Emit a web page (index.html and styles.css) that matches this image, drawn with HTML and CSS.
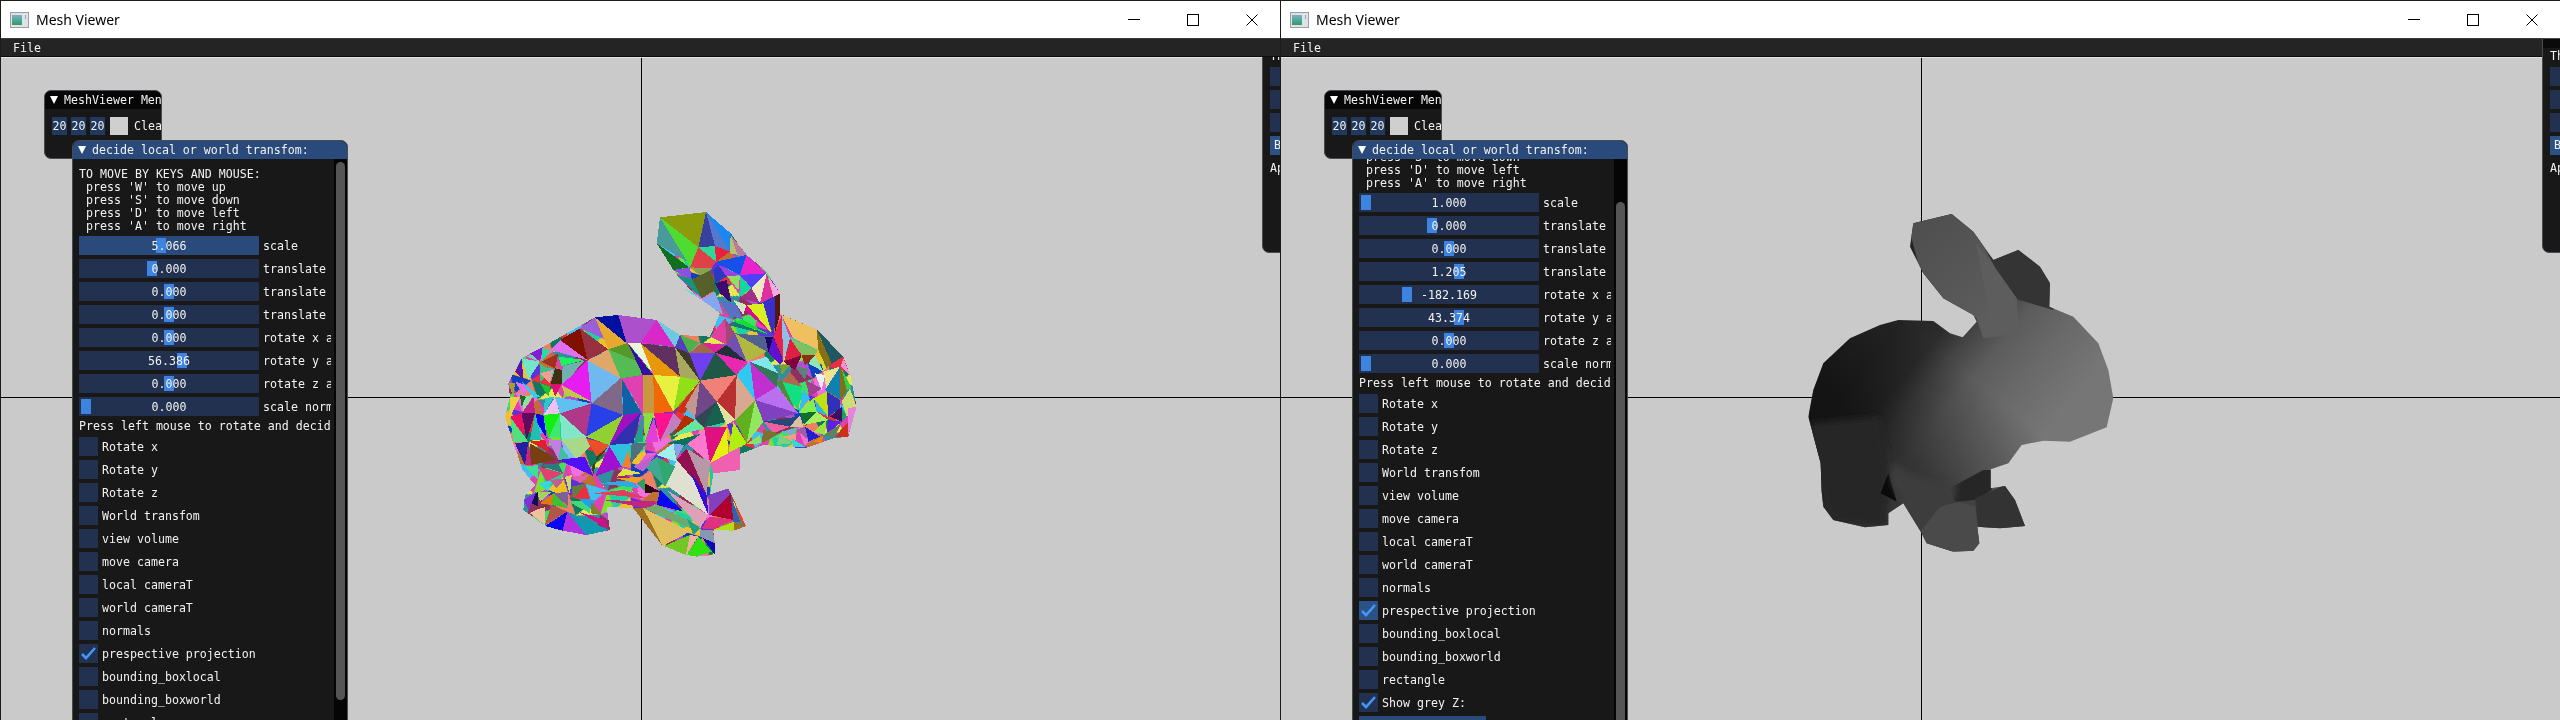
FILE: index.html
```html
<!DOCTYPE html>
<html lang="en">
<head>
    <meta charset="UTF-8">
    <title>Mesh Viewer</title>
    <link rel="stylesheet" href="styles.css">
</head>
<body>

<div class="desktop">

    <!-- left window: random coloured faces -->
    <div class="window">
        <div class="titlebar">
            <svg class="app-icon" viewBox="0 0 19 16"><rect x="0.5" y="0.5" width="18" height="15" fill="#dfe3e6" stroke="#9a9fa4"/><defs><linearGradient id="ico1" x1="0" y1="0" x2="0" y2="1"><stop offset="0" stop-color="#7fb0c8"/><stop offset="1" stop-color="#2f9a6a"/></linearGradient></defs><rect x="2" y="3" width="10" height="10" fill="url(#ico1)"/><rect x="15" y="3" width="1" height="4" fill="#7fb0c8"/></svg>
            <span class="title-text">Mesh Viewer</span>
            <div class="caption-buttons">
                <svg viewBox="0 0 12 12"><path d="M0 5.5H12" stroke="#000" fill="none"/></svg>
                <svg viewBox="0 0 12 12"><rect x="0.5" y="0.5" width="11" height="11" stroke="#000" fill="none"/></svg>
                <svg viewBox="0 0 12 12"><path d="M0.5 0.5L11.5 11.5M11.5 0.5L0.5 11.5" stroke="#000" fill="none"/></svg>
            </div>
        </div>
        <div class="menubar"><span>File</span></div>

        <div class="canvas">
            <div class="axis-v"></div>
            <div class="axis-h"></div>

            <svg class="bunny-color" viewBox="0 0 1200 1200" shape-rendering="crispEdges">
                <defs>
                    <!-- tile under the hand placed faces, so no flat colour shows in the gaps -->
                    <pattern id="facets" width="210" height="150" patternUnits="userSpaceOnUse" patternTransform="rotate(17)">
                        <rect width="210" height="150" fill="#e040b0"/>
                        <polygon fill="#20d0a0" points="0,0 70,0 35,50"/>
                        <polygon fill="#f0c030" points="70,0 35,50 105,50"/>
                        <polygon fill="#6030e0" points="70,0 140,0 105,50"/>
                        <polygon fill="#e83040" points="140,0 105,50 175,50"/>
                        <polygon fill="#40c0f0" points="140,0 210,0 175,50"/>
                        <polygon fill="#80e030" points="0,0 35,50 0,75"/>
                        <polygon fill="#b050d0" points="35,50 0,75 70,100"/>
                        <polygon fill="#1040c0" points="35,50 105,50 70,100"/>
                        <polygon fill="#f08060" points="105,50 70,100 140,100"/>
                        <polygon fill="#107860" points="105,50 175,50 140,100"/>
                        <polygon fill="#e8e850" points="175,50 140,100 210,75"/>
                        <polygon fill="#903060" points="0,75 70,100 0,150"/>
                        <polygon fill="#40e060" points="70,100 0,150 70,150"/>
                        <polygon fill="#f070e0" points="70,100 140,100 105,150"/>
                        <polygon fill="#c07030" points="140,100 105,150 175,150"/>
                        <polygon fill="#3090a0" points="140,100 210,75 210,150"/>
                    </pattern>
                </defs>
                <polygon fill="url(#facets)" points="540,82 678,66 752,130 800,195 860,245 900,310 900,372 1010,418 1090,500 1112,560 1130,650 1105,740 1060,745 975,775 850,765 760,800 690,855 690,915 745,895 798,1008 700,1022 705,1095 650,1100 560,1068 460,955 380,950 390,1020 320,1035 200,1010 130,960 135,915 165,885 128,840 100,760 75,680 90,620 85,580 125,505 190,470 345,382 415,375 530,390 600,435 690,440 720,370 640,310 580,240 530,160"/>
                <!-- ear -->
                <polygon fill="#8b9b0c" points="540,82 678,66 655,172"/>
                <polygon fill="#4fdc32" points="540,82 655,172 630,232"/>
                <polygon fill="#4b9a9a" points="540,82 530,160 622,215"/>
                <polygon fill="#0f6f22" points="530,160 580,240 628,232"/>
                <polygon fill="#38429e" points="678,66 655,172 705,168"/>
                <polygon fill="#5577cc" points="678,66 705,168 750,185"/>
                <polygon fill="#1a88ee" points="678,66 752,130 750,185"/>
                <polygon fill="#2fd898" points="655,172 705,168 708,215"/>
                <polygon fill="#e82040" points="705,168 750,185 708,215"/>
                <polygon fill="#e04048" points="655,172 708,215 695,235 630,232"/>
                <polygon fill="#b6c26c" points="752,130 750,190 775,195"/>
                <polygon fill="#bb7ba0" points="752,135 800,195 775,200"/>
                <polygon fill="#1550ea" points="708,215 800,195 780,255 720,225"/>
                <polygon fill="#e822cc" points="800,195 860,250 780,255"/>
                <polygon fill="#5040f8" points="780,255 860,250 815,295"/>
                <polygon fill="#a040e0" points="715,225 780,255 740,260"/>
                <polygon fill="#8aa050" points="630,232 695,235 675,268"/>
                <polygon fill="#8a50e0" points="580,240 630,232 635,268"/>
                <polygon fill="#55602a" points="635,268 695,240 705,300 665,325"/>
                <polygon fill="#1a9080" points="590,255 635,265 665,325"/>
                <polygon fill="#40e0e0" points="610,295 665,330 640,310"/>
                <polygon fill="#84a8f0" points="665,330 705,305 730,375"/>
                <polygon fill="#2a3ac0" points="700,240 715,225 740,260 705,280"/>
                <polygon fill="#400a70" points="705,280 740,270 755,340 720,310"/>
                <polygon fill="#90e060" points="740,258 780,258 775,300"/>
                <polygon fill="#10d8a0" points="780,258 815,295 778,320"/>
                <polygon fill="#f0e8c0" points="860,250 815,295 840,340"/>
                <polygon fill="#e030a0" points="860,250 880,320 840,340"/>
                <polygon fill="#f8a8e0" points="865,260 900,310 880,320"/>
                <polygon fill="#a03088" points="815,295 840,340 780,325"/>
                <polygon fill="#3830c8" points="845,340 900,310 880,435"/>
                <polygon fill="#501810" points="885,320 900,310 900,372 885,430"/>
                <polygon fill="#d8f020" points="800,345 850,340 875,430"/>
                <polygon fill="#e00890" points="780,350 800,345 870,425"/>
                <polygon fill="#5870c8" points="720,330 770,345 790,390 745,375"/>
                <polygon fill="#d0e8c0" points="760,330 800,345 790,375"/>
                <polygon fill="#30a050" points="715,330 745,380 780,400 735,370"/>
                <polygon fill="#10e030" points="760,395 790,390 870,435"/>
                <polygon fill="#16786e" points="745,405 760,395 880,440"/>
                <!-- head -->
                <polygon fill="#e8204c" points="905,378 880,440 910,515"/>
                <polygon fill="#90c0e0" points="905,378 930,445 910,515"/>
                <polygon fill="#f0c060" points="905,375 1010,418 1015,480 940,445"/>
                <polygon fill="#80c060" points="930,445 1015,480 1005,495 965,495"/>
                <polygon fill="#e02040" points="930,445 965,495 925,515 912,515"/>
                <polygon fill="#205860" points="1010,418 1090,500 1055,520"/>
                <polygon fill="#887010" points="1010,420 1055,520 1040,535 1015,480"/>
                <polygon fill="#c8e030" points="1015,480 1040,535 1030,545"/>
                <polygon fill="#800040" points="910,515 965,495 945,540"/>
                <polygon fill="#903010" points="965,495 1005,495 975,525"/>
                <polygon fill="#90e8b0" points="1005,495 1030,545 985,520"/>
                <polygon fill="#80a028" points="900,525 930,525 905,555"/>
                <polygon fill="#b06850" points="930,545 965,590 905,575"/>
                <polygon fill="#608080" points="945,530 985,535 975,570"/>
                <polygon fill="#f0e090" points="1030,545 1080,530 1040,600"/>
                <polygon fill="#e8f0ff" points="1005,550 1035,555 1025,600"/>
                <polygon fill="#a04090" points="975,570 1025,595 990,620"/>
                <polygon fill="#1080b0" points="1080,530 1085,630 1035,600"/>
                <polygon fill="#807018" points="1080,530 1110,590 1080,630"/>
                <polygon fill="#f090d8" points="1090,505 1112,560 1082,530"/>
                <polygon fill="#30d050" points="1085,535 1115,595 1100,600"/>
                <polygon fill="#c8e070" points="1110,595 1130,650 1100,680 1085,635"/>
                <polygon fill="#3030b8" points="1040,605 1080,630 1080,655 1045,680"/>
                <polygon fill="#c0e010" points="1000,625 1040,605 1045,685"/>
                <polygon fill="#30c0f0" points="970,600 990,625 955,670"/>
                <polygon fill="#10e080" points="905,575 965,590 955,665"/>
                <polygon fill="#508840" points="885,575 905,570 950,670"/>
                <polygon fill="#80f050" points="955,670 1000,625 1010,665"/>
                <polygon fill="#30b8e0" points="1005,630 1045,680 1010,665"/>
                <polygon fill="#107030" points="960,670 1010,665 975,710"/>
                <polygon fill="#a8f060" points="1010,665 1045,690 970,705"/>
                <polygon fill="#401060" points="1050,680 1085,650 1085,695"/>
                <polygon fill="#10a070" points="1085,650 1100,680 1085,695"/>
                <polygon fill="#e880e0" points="1105,655 1130,650 1105,735"/>
                <polygon fill="#d03018" points="1105,695 1105,740 1065,740"/>
                <polygon fill="#6020e0" points="1045,690 1085,695 1040,735"/>
                <polygon fill="#608060" points="1030,735 1085,700 1060,745"/>
                <polygon fill="#d8c0a0" points="930,710 960,675 970,710"/>
                <polygon fill="#a0e040" points="1000,725 1040,690 1035,735"/>
                <polygon fill="#2020d0" points="975,710 1020,740 985,755"/>
                <polygon fill="#a060a0" points="950,720 975,710 985,750"/>
                <polygon fill="#f08010" points="1000,755 1030,735 1025,760"/>
                <polygon fill="#80a8e0" points="905,725 950,715 935,735"/>
                <polygon fill="#f0a080" points="910,740 950,730 945,760"/>
                <polygon fill="#f060a0" points="850,695 930,710 880,730"/>
                <polygon fill="#807030" points="850,720 900,730 845,760"/>
                <polygon fill="#80d080" points="900,730 935,760 890,765"/>
                <polygon fill="#30d8d8" points="935,745 975,770 940,770"/>
                <!-- body top -->
                <polygon fill="#9a60d8" points="300,415 345,382 380,450"/>
                <polygon fill="#e8a830" points="345,382 440,460 385,478"/>
                <polygon fill="#0010a0" points="345,382 415,375 440,460"/>
                <polygon fill="#ac50cc" points="415,375 530,390 482,458 440,460"/>
                <polygon fill="#d828c8" points="530,390 482,458 585,472"/>
                <polygon fill="#70c8e0" points="530,390 600,435 585,472"/>
                <polygon fill="#5040c0" points="600,435 628,490 585,472"/>
                <polygon fill="#50b048" points="600,435 660,458 628,490"/>
                <polygon fill="#801000" points="300,415 240,450 322,510"/>
                <polygon fill="#983040" points="300,415 385,478 322,510"/>
                <polygon fill="#e070f0" points="240,450 212,480 322,510"/>
                <polygon fill="#e0a868" points="385,478 322,512 422,565"/>
                <polygon fill="#559a28" points="385,478 440,460 485,520"/>
                <polygon fill="#55bb55" points="385,478 485,520 488,555 422,565"/>
                <polygon fill="#e8f8d8" points="445,460 482,460 520,550"/>
                <polygon fill="#3510a0" points="445,462 520,555 488,555"/>
                <polygon fill="#e89808" points="482,460 600,560 520,555"/>
                <polygon fill="#603060" points="482,460 585,472 600,560"/>
                <polygon fill="#a8a860" points="585,472 660,572 600,560"/>
                <polygon fill="#403828" points="585,472 628,490 660,572"/>
                <polygon fill="#7040f0" points="628,490 705,488 660,572"/>
                <polygon fill="#a06848" points="628,490 665,458 705,488"/>
                <polygon fill="#205848" points="705,488 770,555 660,572"/>
                <polygon fill="#e828b0" points="705,488 800,515 770,555"/>
                <polygon fill="#e040a0" points="690,440 735,385 740,465"/>
                <polygon fill="#a04878" points="735,385 765,430 740,465"/>
                <polygon fill="#203038" points="705,488 740,465 800,515"/>
                <polygon fill="#7050b0" points="765,430 740,465 800,515"/>
                <polygon fill="#b0b840" points="765,430 860,485 800,515"/>
                <polygon fill="#506090" points="765,430 880,440 860,485"/>
                <polygon fill="#e020a0" points="665,458 740,465 705,488"/>
                <polygon fill="#180860" points="855,440 880,440 905,500 865,485"/>
                <polygon fill="#6010d0" points="880,440 910,515 900,525 865,490"/>
                <polygon fill="#e71cf0" points="322,512 245,585 335,640"/>
                <polygon fill="#70b8f0" points="322,512 422,565 335,640"/>
                <polygon fill="#806888" points="422,565 335,640 430,675"/>
                <polygon fill="#e040b0" points="430,565 488,555 488,675"/>
                <polygon fill="#1060a8" points="425,565 488,675 430,675"/>
                <polygon fill="#c89840" points="488,555 520,555 522,670 488,675"/>
                <polygon fill="#e8f040" points="520,555 600,560 580,665"/>
                <polygon fill="#f06808" points="520,555 580,665 522,670"/>
                <polygon fill="#90e018" points="600,560 660,572 580,665"/>
                <polygon fill="#d03018" points="660,572 585,665 615,670"/>
                <polygon fill="#c09890" points="660,572 615,650 645,685"/>
                <polygon fill="#704888" points="660,572 710,635 645,685"/>
                <polygon fill="#f08078" points="660,572 770,555 710,635"/>
                <polygon fill="#b83030" points="770,555 710,635 765,690"/>
                <polygon fill="#d8a890" points="770,555 825,630 765,690"/>
                <polygon fill="#30c8f0" points="810,515 770,555 825,630"/>
                <polygon fill="#c030d0" points="810,515 825,630 890,590"/>
                <polygon fill="#307858" points="810,515 890,590 895,550"/>
                <polygon fill="#80e8e8" points="810,515 860,500 895,550"/>
                <polygon fill="#b870f0" points="890,590 825,630 955,670"/>
                <polygon fill="#8040c0" points="825,630 850,695 955,670"/>
                <polygon fill="#284878" points="850,695 955,680 930,710"/>
                <polygon fill="#60b020" points="825,630 765,690 800,760"/>
                <polygon fill="#90e860" points="825,630 850,695 800,760"/>
                <polygon fill="#186050" points="710,635 765,690 672,712"/>
                <polygon fill="#304850" points="710,635 645,685 672,712"/>
                <polygon fill="#e0e0a0" points="710,635 765,690 740,705"/>
                <polygon fill="#e01080" points="672,712 740,712 690,820"/>
                <polygon fill="#e8f010" points="740,712 690,820 745,795"/>
                <polygon fill="#b0f010" points="760,695 745,795 800,760"/>
                <polygon fill="#ff78d0" points="620,760 672,715 690,820"/>
                <polygon fill="#901050" points="620,775 590,810 680,915"/>
                <polygon fill="#b898a8" points="620,775 690,820 680,915"/>
                <polygon fill="#f060b0" points="690,820 780,770 780,840 700,850"/>
                <polygon fill="#20c8a0" points="690,825 700,850 690,915"/>
                <polygon fill="#90e060" points="840,735 845,760 800,762"/>
                <!-- left flank -->
                <polygon fill="#70d8b0" points="140,500 190,470 180,515"/>
                <polygon fill="#8020d0" points="150,490 190,470 180,515"/>
                <polygon fill="#a03020" points="185,515 235,490 225,535"/>
                <polygon fill="#20f060" points="235,500 315,510 245,528"/>
                <polygon fill="#70b0b0" points="248,528 315,512 245,585"/>
                <polygon fill="#20e0a0" points="185,475 212,480 185,515"/>
                <polygon fill="#70e8c8" points="125,505 180,515 145,570"/>
                <polygon fill="#6010b0" points="105,545 125,505 130,570"/>
                <polygon fill="#40c080" points="180,520 220,545 180,575"/>
                <polygon fill="#f0a090" points="180,550 220,540 210,580"/>
                <polygon fill="#403010" points="225,535 245,540 245,582 212,582"/>
                <polygon fill="#e01070" points="212,582 245,582 225,620"/>
                <polygon fill="#c0c848" points="245,585 335,635 255,615"/>
                <polygon fill="#a8a020" points="85,580 105,580 100,620"/>
                <polygon fill="#e070f0" points="105,575 150,590 130,615"/>
                <polygon fill="#30d0f0" points="125,575 180,620 160,625"/>
                <polygon fill="#20c030" points="180,580 212,590 205,620"/>
                <polygon fill="#90e0a0" points="125,620 160,615 130,670"/>
                <polygon fill="#c02090" points="160,620 165,670 125,670"/>
                <polygon fill="#f0d040" points="90,620 120,620 90,680"/>
                <polygon fill="#107020" points="120,615 138,620 125,650"/>
                <polygon fill="#30c8d0" points="195,625 222,620 190,675"/>
                <polygon fill="#f0c0f0" points="225,622 190,675 240,670"/>
                <polygon fill="#60c0f0" points="225,620 335,640 240,670"/>
                <polygon fill="#b03888" points="240,670 335,640 318,740"/>
                <polygon fill="#2840e8" points="335,640 430,675 318,740"/>
                <polygon fill="#90d030" points="430,675 318,740 388,765"/>
                <polygon fill="#a010c0" points="430,675 482,668 388,765"/>
                <polygon fill="#3030b0" points="482,668 460,760 388,765"/>
                <polygon fill="#20a090" points="490,668 460,760 490,755"/>
                <polygon fill="#88e040" points="490,668 522,670 495,755"/>
                <polygon fill="#e040d8" points="522,680 495,755 535,755"/>
                <polygon fill="#ff1090" points="522,670 580,670 540,755"/>
                <polygon fill="#c080c0" points="580,670 610,700 540,755"/>
                <polygon fill="#b03000" points="615,675 575,740 645,690"/>
                <polygon fill="#60e8a0" points="575,740 645,690 672,715"/>
                <polygon fill="#107060" points="560,760 665,730 610,770"/>
                <polygon fill="#10f010" points="190,675 240,670 205,745"/>
                <polygon fill="#40e870" points="240,670 205,745 240,740"/>
                <polygon fill="#80e8c8" points="240,670 318,740 245,750"/>
                <polygon fill="#0808e0" points="168,672 190,675 200,745 172,700"/>
                <polygon fill="#a8d888" points="245,750 318,740 330,770 290,810"/>
                <polygon fill="#80c0f0" points="245,750 290,810 255,810"/>
                <polygon fill="#40c0a0" points="238,760 275,815 235,810"/>
                <polygon fill="#e85028" points="318,745 388,765 350,800"/>
                <polygon fill="#304810" points="388,768 335,830 340,855 350,800"/>
                <polygon fill="#a010d0" points="388,768 345,860 425,830"/>
                <polygon fill="#30c0e0" points="388,765 455,760 425,830"/>
                <polygon fill="#507080" points="455,760 500,760 450,825"/>
                <polygon fill="#e860d0" points="500,790 465,835 530,790"/>
                <polygon fill="#f08030" points="445,780 425,830 455,835"/>
                <polygon fill="#5010f8" points="235,810 315,800 340,858"/>
                <polygon fill="#f01060" points="90,680 125,670 135,750"/>
                <polygon fill="#600a60" points="125,670 165,670 140,750"/>
                <polygon fill="#20c0b0" points="165,670 175,710 185,750 150,750"/>
                <polygon fill="#50e080" points="90,680 145,755 100,755"/>
                <polygon fill="#f0a0e0" points="100,760 115,800 128,835"/>
                <polygon fill="#e02030" points="150,755 195,750 210,790"/>
                <polygon fill="#784010" points="150,760 210,795 225,810 150,825"/>
                <polygon fill="#c080e0" points="205,748 245,750 235,810"/>
                <polygon fill="#2020a0" points="105,760 145,755 135,825"/>
                <polygon fill="#c02880" points="145,755 155,825 135,825"/>
                <polygon fill="#307880" points="175,825 235,820 250,850"/>
                <polygon fill="#40e090" points="135,830 175,825 175,870"/>
                <polygon fill="#e04070" points="175,830 250,850 200,875"/>
                <polygon fill="#30d8e0" points="175,880 215,870 205,905"/>
                <polygon fill="#c06090" points="210,870 255,865 230,895"/>
                <!-- front leg and feet -->
                <polygon fill="#f0c020" points="215,905 255,880 260,915"/>
                <polygon fill="#c8e060" points="255,860 275,855 270,915"/>
                <polygon fill="#608040" points="275,890 320,880 280,925"/>
                <polygon fill="#e060b0" points="275,860 330,855 300,880"/>
                <polygon fill="#f0c0a0" points="150,970 195,945 195,1005"/>
                <polygon fill="#b05848" points="195,1005 215,945 262,965"/>
                <polygon fill="#0808f0" points="195,1008 262,965 248,1022"/>
                <polygon fill="#b030e0" points="248,1022 262,965 318,1035"/>
                <polygon fill="#1098b0" points="262,965 388,1020 318,1035"/>
                <polygon fill="#d01090" points="295,965 375,990 385,1018"/>
                <polygon fill="#40d878" points="265,935 335,930 330,970"/>
                <polygon fill="#20a0f0" points="295,925 345,930 335,960"/>
                <polygon fill="#40c030" points="220,910 265,955 215,945"/>
                <polygon fill="#e07810" points="180,940 220,910 215,945"/>
                <polygon fill="#806098" points="220,910 265,905 265,950"/>
                <polygon fill="#a8d060" points="170,905 215,905 180,935"/>
                <polygon fill="#101050" points="145,935 175,905 175,950"/>
                <polygon fill="#803820" points="150,965 215,945 195,945"/>
                <polygon fill="#808028" points="335,935 365,975 332,970"/>
                <polygon fill="#8030e0" points="130,930 170,905 145,960"/>
                <!-- belly -->
                <polygon fill="#30a8e0" points="360,880 450,870 480,895"/>
                <polygon fill="#f0a020" points="410,865 490,860 470,880"/>
                <polygon fill="#e04060" points="340,910 430,900 500,925"/>
                <polygon fill="#d0f040" points="345,885 490,910 430,900"/>
                <polygon fill="#c02880" points="370,930 540,935 500,955"/>
                <polygon fill="#30a060" points="470,880 495,865 495,905"/>
                <polygon fill="#300810" points="495,880 540,905 495,910"/>
                <polygon fill="#0808f0" points="540,900 610,965 530,945"/>
                <polygon fill="#e0e0d0" points="590,810 680,915 685,975 558,885"/>
                <polygon fill="#3010d8" points="630,845 680,915 685,975"/>
                <polygon fill="#40a890" points="495,830 530,800 555,890"/>
                <polygon fill="#30a870" points="530,800 585,830 555,890"/>
                <polygon fill="#a0f0f0" points="530,795 580,760 590,815"/>
                <polygon fill="#80a8e8" points="580,760 612,765 590,805"/>
                <polygon fill="#c060d0" points="460,830 530,790 490,845"/>
                <polygon fill="#e0e040" points="430,835 485,850 410,860"/>
                <polygon fill="#8040c0" points="685,915 745,895 752,910 688,975"/>
                <polygon fill="#b00030" points="688,975 752,910 760,990"/>
                <polygon fill="#3060b0" points="752,915 780,995 760,995"/>
                <polygon fill="#f04020" points="755,915 798,1008 782,995"/>
                <polygon fill="#e03080" points="688,980 760,990 695,1018 665,1015"/>
                <polygon fill="#b0e010" points="698,1020 762,995 762,1022"/>
                <polygon fill="#a07020" points="762,995 798,1008 762,1022"/>
                <polygon fill="#e0a0b8" points="560,900 685,975 660,1015"/>
                <polygon fill="#70a870" points="490,955 530,945 660,1010 632,1015"/>
                <polygon fill="#e0c060" points="490,955 630,1025 548,1068"/>
                <polygon fill="#a07020" points="460,955 490,955 548,1068"/>
                <polygon fill="#70c820" points="552,1068 630,1035 618,1095"/>
                <polygon fill="#f0b0a0" points="630,1035 655,1040 618,1095"/>
                <polygon fill="#30e010" points="655,1040 695,1085 650,1100 620,1095"/>
                <polygon fill="#0808b8" points="665,1040 705,1060 705,1095"/>
                <polygon fill="#8898b0" points="660,1020 698,1020 705,1060 660,1040"/>
                <polygon fill="#20a080" points="620,985 660,1015 640,1035"/>
            </svg>

            <div class="imgui-win menu-win">
                <div class="win-title"><i class="arrow"></i><span>MeshViewer Menu</span></div>
                <div class="color-row">
                    <span class="num-cell">20</span>
                    <span class="num-cell">20</span>
                    <span class="num-cell">20</span>
                    <span class="swatch"></span>
                    <span>Clear</span>
                </div>
            </div>

            <div class="imgui-win tool-win">
                <div class="win-title active"><i class="arrow"></i><span>decide local or world transfom:</span></div>
                <div class="win-body">
                    <div class="win-content">
                        <pre class="help-text">TO MOVE BY KEYS AND MOUSE:
 press 'W' to move up
 press 'S' to move down
 press 'D' to move left
 press 'A' to move right</pre>
                        <div class="row"><div class="slider hover"><i class="grab" style="left:77px"></i><span>5.066</span></div><label>scale</label></div>
                        <div class="row"><div class="slider"><i class="grab" style="left:68px"></i><span>0.000</span></div><label>translate x</label></div>
                        <div class="row"><div class="slider"><i class="grab" style="left:85px"></i><span>0.000</span></div><label>translate y</label></div>
                        <div class="row"><div class="slider"><i class="grab" style="left:85px"></i><span>0.000</span></div><label>translate z</label></div>
                        <div class="row"><div class="slider"><i class="grab" style="left:85px"></i><span>0.000</span></div><label>rotate x axis</label></div>
                        <div class="row"><div class="slider"><i class="grab" style="left:98px"></i><span>56.386</span></div><label>rotate y axis</label></div>
                        <div class="row"><div class="slider"><i class="grab" style="left:85px"></i><span>0.000</span></div><label>rotate z axis</label></div>
                        <div class="row"><div class="slider"><i class="grab" style="left:2px"></i><span>0.000</span></div><label>scale normals</label></div>
                        <div class="line">Press left mouse to rotate and decide</div>
                        <div class="row"><i class="check"></i><label>Rotate x</label></div>
                        <div class="row"><i class="check"></i><label>Rotate y</label></div>
                        <div class="row"><i class="check"></i><label>Rotate z</label></div>
                        <div class="row"><i class="check"></i><label>World transfom</label></div>
                        <div class="row"><i class="check"></i><label>view volume</label></div>
                        <div class="row"><i class="check"></i><label>move camera</label></div>
                        <div class="row"><i class="check"></i><label>local cameraT</label></div>
                        <div class="row"><i class="check"></i><label>world cameraT</label></div>
                        <div class="row"><i class="check"></i><label>normals</label></div>
                        <div class="row"><i class="check"><svg viewBox="0 0 19 19"><path d="M3 10L7 14L16 4" fill="none" stroke="#4296fa" stroke-width="2.6"/></svg></i><label>prespective projection</label></div>
                        <div class="row"><i class="check"></i><label>bounding_boxlocal</label></div>
                        <div class="row"><i class="check"></i><label>bounding_boxworld</label></div>
                        <div class="row"><i class="check"></i><label>rectangle</label></div>
                    </div>
                    <div class="scrollbar"><div class="thumb thumb-top"></div></div>
                </div>
            </div>
        </div>

        <div class="imgui-win side-win">
            <div class="side-head"></div>
            <div class="line">This is</div>
            <div class="side-cell"></div>
            <div class="side-cell"></div>
            <div class="side-cell"></div>
            <div class="side-cell button">Button</div>
            <div class="line">Application</div>
        </div>
    </div>

    <!-- right window: grey z shading -->
    <div class="window window-front">
        <div class="titlebar">
            <svg class="app-icon" viewBox="0 0 19 16"><rect x="0.5" y="0.5" width="18" height="15" fill="#dfe3e6" stroke="#9a9fa4"/><rect x="2" y="3" width="10" height="10" fill="url(#ico1)"/><rect x="15" y="3" width="1" height="4" fill="#7fb0c8"/></svg>
            <span class="title-text">Mesh Viewer</span>
            <div class="caption-buttons">
                <svg viewBox="0 0 12 12"><path d="M0 5.5H12" stroke="#000" fill="none"/></svg>
                <svg viewBox="0 0 12 12"><rect x="0.5" y="0.5" width="11" height="11" stroke="#000" fill="none"/></svg>
                <svg viewBox="0 0 12 12"><path d="M0.5 0.5L11.5 11.5M11.5 0.5L0.5 11.5" stroke="#000" fill="none"/></svg>
            </div>
        </div>
        <div class="menubar"><span>File</span></div>

        <div class="canvas">
            <div class="axis-v"></div>
            <div class="axis-h"></div>

            <svg class="bunny-grey" viewBox="0 0 1140 1140">
                <defs>
                    <clipPath id="bunnyClip"><polygon points="400,100 515,72 580,125 640,210 715,180 780,230 810,280 808,350 880,380 955,460 985,540 1000,625 980,712 870,755 790,752 725,765 685,820 632,838 632,895 675,888 705,930 735,1008 660,1015 592,1010 598,1060 580,1082 520,1085 440,1060 425,1030 370,940 325,970 325,1005 255,1012 160,990 130,950 125,905 122,820 85,680 100,600 130,520 210,445 300,405 355,390 460,393 510,430 548,442 590,395 580,375 490,325 430,250 390,170"/></clipPath>
                    <linearGradient id="depth" gradientUnits="userSpaceOnUse" x1="300" y1="480" x2="709" y2="825">
                        <stop offset="0" stop-color="#242424"/>
                        <stop offset="0.2" stop-color="#2c2c2c"/>
                        <stop offset="0.33" stop-color="#444444"/>
                        <stop offset="0.5" stop-color="#5c5c5c"/>
                        <stop offset="0.7" stop-color="#686868"/>
                        <stop offset="1" stop-color="#767676"/>
                    </linearGradient>
                    <linearGradient id="earShade" gradientUnits="userSpaceOnUse" x1="400" y1="120" x2="680" y2="430">
                        <stop offset="0" stop-color="#4f4f4f"/>
                        <stop offset="1" stop-color="#5f5f5f"/>
                    </linearGradient>
                    <linearGradient id="bellyShade" gradientUnits="userSpaceOnUse" x1="650" y1="620" x2="450" y2="860">
                        <stop offset="0" stop-color="#000" stop-opacity="0"/>
                        <stop offset="1" stop-color="#000" stop-opacity="0.45"/>
                    </linearGradient>
                    <filter id="softer" x="-20%" y="-20%" width="140%" height="140%"><feGaussianBlur stdDeviation="10"/></filter>
                </defs>
                <g clip-path="url(#bunnyClip)">
                    <rect width="1140" height="1140" fill="url(#depth)"/>
                    <rect width="1140" height="1140" fill="url(#bellyShade)"/>
                    <polygon fill="#343434" points="630,200 720,170 820,270 820,360 700,325"/>
                    <polygon fill="url(#earShade)" points="380,90 520,60 590,130 650,240 710,325 715,430 610,445 590,385 480,320 420,240"/>
                    <polygon fill="#5d5d5d" points="588,160 650,240 710,325 715,430 612,445 625,350"/>
                    <g filter="url(#softer)">
                        <polygon fill="#262626" points="90,700 300,680 320,800 330,900 320,1010 150,1000 100,850"/>
                    </g>
                    <polygon fill="#0a0a0a" points="302,910 325,850 350,935 370,945"/>
                    <polygon fill="#262626" points="510,895 610,840 635,840 635,900 585,930 525,935"/>
                    <polygon fill="#333333" points="585,925 675,885 710,935 740,1015 595,1015"/>
                    <g filter="url(#softer)">
                        <polygon fill="#3e3e3e" points="335,820 400,860 480,880 530,880 525,930 480,960 430,1040 370,940 335,880"/>
                    </g>
                    <polygon fill="#4a4a4a" points="425,1020 480,950 535,935 585,950 600,1060 580,1090 510,1090 435,1065"/>
                </g>
            </svg>

            <div class="imgui-win menu-win">
                <div class="win-title"><i class="arrow"></i><span>MeshViewer Menu</span></div>
                <div class="color-row">
                    <span class="num-cell">20</span>
                    <span class="num-cell">20</span>
                    <span class="num-cell">20</span>
                    <span class="swatch"></span>
                    <span>Clear</span>
                </div>
            </div>

            <div class="imgui-win tool-win">
                <div class="win-title active"><i class="arrow"></i><span>decide local or world transfom:</span></div>
                <div class="win-body">
                    <div class="win-content scrolled">
                        <pre class="help-text">TO MOVE BY KEYS AND MOUSE:
 press 'W' to move up
 press 'S' to move down
 press 'D' to move left
 press 'A' to move right</pre>
                        <div class="row"><div class="slider"><i class="grab" style="left:2px"></i><span>1.000</span></div><label>scale</label></div>
                        <div class="row"><div class="slider"><i class="grab" style="left:68px"></i><span>0.000</span></div><label>translate x</label></div>
                        <div class="row"><div class="slider"><i class="grab" style="left:85px"></i><span>0.000</span></div><label>translate y</label></div>
                        <div class="row"><div class="slider"><i class="grab" style="left:95px"></i><span>1.205</span></div><label>translate z</label></div>
                        <div class="row"><div class="slider"><i class="grab" style="left:43px"></i><span>-182.169</span></div><label>rotate x axis</label></div>
                        <div class="row"><div class="slider"><i class="grab" style="left:95px"></i><span>43.374</span></div><label>rotate y axis</label></div>
                        <div class="row"><div class="slider"><i class="grab" style="left:85px"></i><span>0.000</span></div><label>rotate z axis</label></div>
                        <div class="row"><div class="slider"><i class="grab" style="left:2px"></i><span>0.000</span></div><label>scale normals</label></div>
                        <div class="line">Press left mouse to rotate and decide</div>
                        <div class="row"><i class="check"></i><label>Rotate x</label></div>
                        <div class="row"><i class="check"></i><label>Rotate y</label></div>
                        <div class="row"><i class="check"></i><label>Rotate z</label></div>
                        <div class="row"><i class="check"></i><label>World transfom</label></div>
                        <div class="row"><i class="check"></i><label>view volume</label></div>
                        <div class="row"><i class="check"></i><label>move camera</label></div>
                        <div class="row"><i class="check"></i><label>local cameraT</label></div>
                        <div class="row"><i class="check"></i><label>world cameraT</label></div>
                        <div class="row"><i class="check"></i><label>normals</label></div>
                        <div class="row"><i class="check hover"><svg viewBox="0 0 19 19"><path d="M3 10L7 14L16 4" fill="none" stroke="#4296fa" stroke-width="2.6"/></svg></i><label>prespective projection</label></div>
                        <div class="row"><i class="check"></i><label>bounding_boxlocal</label></div>
                        <div class="row"><i class="check"></i><label>bounding_boxworld</label></div>
                        <div class="row"><i class="check"></i><label>rectangle</label></div>
                        <div class="row"><i class="check"><svg viewBox="0 0 19 19"><path d="M3 10L7 14L16 4" fill="none" stroke="#4296fa" stroke-width="2.6"/></svg></i><label>Show grey Z:</label></div>
                        <div class="row"><div class="slider short hover"></div></div>
                    </div>
                    <div class="scrollbar"><div class="thumb thumb-low"></div></div>
                </div>
            </div>
        </div>

        <div class="imgui-win side-win">
            <div class="side-head"></div>
            <div class="line">This is</div>
            <div class="side-cell"></div>
            <div class="side-cell"></div>
            <div class="side-cell"></div>
            <div class="side-cell button">Button</div>
            <div class="line">Application</div>
        </div>
    </div>

</div>

</body>
</html>
```

FILE: styles.css
```css
html, body {
    margin: 0;
    padding: 0;
    height: 720px;
    overflow: hidden;
    background-color: #cacaca;
}

.desktop {
    display: flex;
    width: 2560px;
    height: 720px;
    font-family: "DejaVu Sans Mono", monospace;
    font-size: 11.62px;
    line-height: 13px;
    color: #f2f2f2;
    will-change: transform;
}

.window {
    position: relative;
    display: flex;
    flex-direction: column;
    width: 1280px;
    height: 720px;
    box-sizing: border-box;
    border-left: 1px solid #1c1c1c;
    border-top: 1px solid #1c1c1c;
    overflow: hidden;
}

/* native title bar */
.titlebar {
    display: flex;
    align-items: center;
    flex: 0 0 37px;
    background-color: #fff;
    padding-left: 9px;
}

.app-icon {
    width: 19px;
    height: 16px;
    margin-right: 7px;
}

.title-text {
    font-family: "Noto Sans", sans-serif;
    font-size: 14px;
    line-height: 20px;
    color: #000;
}

.caption-buttons {
    display: flex;
    gap: 47px;
    margin-left: auto;
    margin-right: 22px;
}

.caption-buttons svg {
    width: 12px;
    height: 12px;
}

.menubar {
    position: relative;
    z-index: 2;
    flex: 0 0 19px;
    box-sizing: border-box;
    padding: 3px 0 0 12px;
    background-color: #242424;
    border-top: 1px solid #3a3a3a;
    border-bottom: 1px solid #0d0d0d;
    line-height: 13px;
}

.canvas {
    position: relative;
    flex: 1;
    background-color: #cacaca;
    border-top: 1px solid #e4e4e4;
}

.axis-v {
    position: absolute;
    left: 640px;
    top: 0;
    bottom: 0;
    width: 1px;
    background-color: #000;
}

.axis-h {
    position: absolute;
    left: 0;
    right: 0;
    top: 339px;
    height: 1px;
    background-color: #000;
}

.bunny-color {
    position: absolute;
    left: 479px;
    top: 132px;
    width: 400px;
    height: 400px;
}

.bunny-grey {
    position: absolute;
    left: 499px;
    top: 132px;
    width: 380px;
    height: 380px;
}

/* imgui style windows */
.imgui-win {
    position: absolute;
    box-sizing: border-box;
    background-color: #181818;
    border: 1px solid #4a4a52;
    overflow: hidden;
}

.menu-win {
    left: 43px;
    top: 32px;
    width: 118px;
    height: 69px;
    border-radius: 7px;
}

.tool-win {
    left: 71px;
    top: 82px;
    width: 276px;
    height: 640px;
    border-radius: 7px 7px 0 0;
    display: flex;
    flex-direction: column;
}

.side-win {
    left: 1261px;
    top: 37px;
    width: 200px;
    height: 215px;
    border-radius: 0 0 0 7px;
    padding-left: 7px;
    z-index: 1;
}

.window-front .side-win {
    z-index: 3;
}

.side-head {
    height: 9px;
    margin-left: -7px;
    background-color: #0a0a0a;
}

.side-win .line {
    margin-bottom: 4px;
    padding-top: 2px;
}

.side-cell {
    height: 19px;
    margin-bottom: 4px;
    background-color: #21314f;
}

.side-cell.button {
    background-color: #2c5285;
    padding: 3px 0 0 4px;
    height: 16px;
    margin-bottom: 5px;
}

.win-title {
    display: flex;
    align-items: center;
    flex: 0 0 18px;
    height: 18px;
    padding-left: 5px;
    background-color: #060606;
    white-space: nowrap;
}

.win-title.active {
    background-color: #294a7a;
}

.arrow {
    flex: none;
    width: 0;
    height: 0;
    margin-right: 6px;
    border-left: 4.5px solid transparent;
    border-right: 4.5px solid transparent;
    border-top: 8px solid #fff;
}

.color-row {
    display: flex;
    align-items: center;
    gap: 4px;
    margin: 8px 0 0 7px;
    height: 18px;
    white-space: nowrap;
}

.color-row > span {
    flex: none;
}

.num-cell {
    width: 15px;
    height: 18px;
    line-height: 18px;
    background-color: #21395f;
    text-align: center;
    overflow: hidden;
}

.swatch {
    width: 18px;
    height: 18px;
    margin-left: 1px;
    margin-right: 2px;
    background-color: #cfcfcf;
}

.win-body {
    display: flex;
    flex: 1;
    min-height: 0;
}

.win-content {
    flex: 1;
    min-width: 0;
    padding-left: 6px;
    padding-right: 3px;
    padding-top: 9px;
    overflow: hidden;
}

.win-content.scrolled > .help-text {
    margin-top: -43px;
}

.help-text {
    margin: 0 0 3px 0;
    font: inherit;
    white-space: pre;
}

.line {
    margin-bottom: 4px;
    white-space: nowrap;
    overflow: hidden;
}

.row {
    display: flex;
    align-items: center;
    height: 19px;
    margin-bottom: 4px;
    white-space: nowrap;
    overflow: hidden;
}

.row label {
    margin-left: 4px;
    padding-top: 2px;
}

.slider {
    position: relative;
    flex: none;
    width: 180px;
    height: 19px;
    line-height: 21px;
    text-align: center;
    background-color: #21314f;
}

.slider span {
    position: relative;
}

.slider.hover {
    background-color: #294a7a;
}

.slider.short {
    width: 127px;
}

.grab {
    position: absolute;
    top: 2px;
    width: 10px;
    height: 15px;
    background-color: #3d84e0;
}

.check {
    flex: none;
    width: 19px;
    height: 19px;
    background-color: #21314f;
}

.check.hover {
    background-color: #2c5285;
}

.check svg {
    display: block;
    width: 19px;
    height: 19px;
}

.scrollbar {
    flex: 0 0 13px;
    box-sizing: border-box;
    padding: 0 2px 0 2px;
    background-color: #050505;
}

.thumb {
    background-color: #555;
    border-radius: 5px;
}

.thumb-top {
    height: 538px;
    margin-top: 3px;
}

.thumb-low {
    height: 600px;
    margin-top: 43px;
}
```
